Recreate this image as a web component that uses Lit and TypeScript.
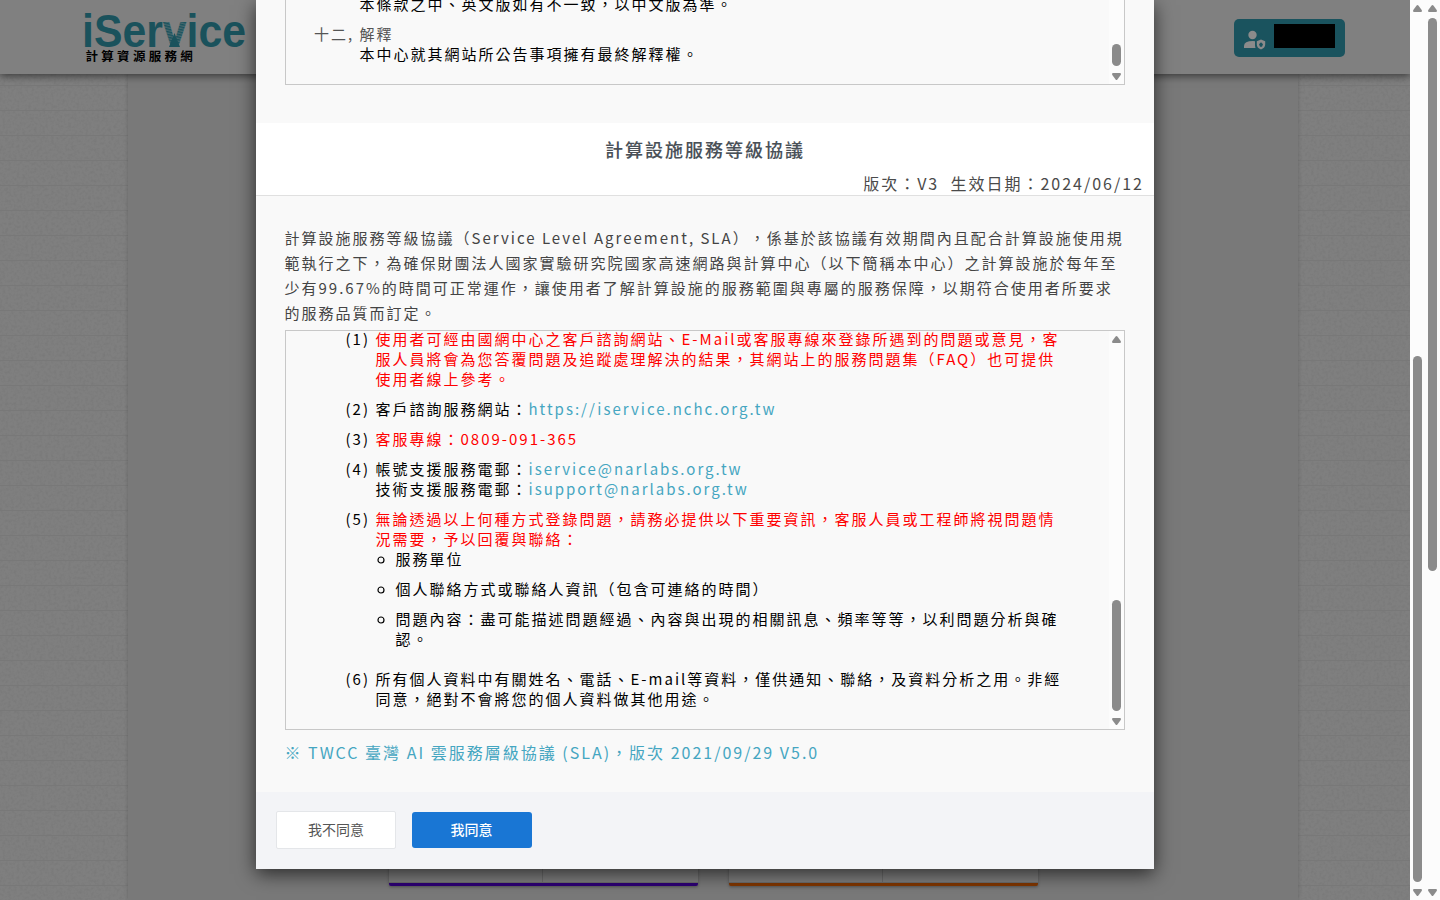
import { LitElement, html, css } from "lit";
import { customElement, property } from "lit/decorators.js";

@customElement("scroll-rail")
class ScrollRail extends LitElement {
  @property({ type: Number }) start = 0;
  @property({ type: Number }) size = 0;
  @property({ type: Boolean }) noup = false;
  static styles = css`
    :host { display: block; width: 15px; height: 100%; background: #fcfcfc; position: relative; flex: none; }
    .thumb { position: absolute; left: 3px; width: 9px; border-radius: 5px; background: #8b8b8b; }
    svg { position: absolute; left: 3px; width: 9px; height: 7px; fill: #8b8b8b; }
    .up { top: 5px; }
    .down { bottom: 4px; }
  `;
  render() {
    return html`
      ${this.noup ? "" : html`<svg class="up" viewBox="0 0 9 7"><path d="M4.5 0Q5 0 5.4.5L8.7 5Q9.4 7 8 7H1Q-.4 7 .3 5L3.6.5Q4 0 4.5 0Z"/></svg>`}
      <div class="thumb" style="top:${this.start}px;height:${this.size}px"></div>
      <svg class="down" viewBox="0 0 9 7"><path d="M4.5 7Q5 7 5.4 6.5L8.7 2Q9.4 0 8 0H1Q-.4 0 .3 2L3.6 6.5Q4 7 4.5 7Z"/></svg>
    `;
  }
}

@customElement("app-root")
class AppRoot extends LitElement {
  static styles = css`
    :host {
      display: flex; width: 1440px; height: 900px; overflow: hidden; position: relative;
      font-family: "Noto Sans CJK TC", sans-serif; font-size: 15px; letter-spacing: 2px;
      text-spacing-trim: space-all;
    }
    * { box-sizing: border-box; }
    .page { flex: 1; display: flex; flex-direction: column; background: #7f7f7f; position: relative; overflow: hidden; }
    .grain { position: absolute; inset: 0; width: 100%; height: 100%; }
    header {
      height: 74px; flex: none; background: #808080; position: relative; z-index: 1; display: flex;
      justify-content: space-between; padding: 0 65px 0 80px; box-shadow: 0 2px 8px rgba(0,0,0,.55);
    }
    .logo { width: 170px; height: 74px; }
    .word { font: bold 46px "Liberation Sans", sans-serif; letter-spacing: 0; fill: #1a525c; }
    .weave { fill: url(#stripes); }
    .sub { font: bold 12.5px "Noto Sans CJK TC", sans-serif; letter-spacing: 3.3px; fill: #000; }
    .user { margin-top: 19px; width: 111px; height: 38px; border-radius: 5px; background: #1a535e; display: flex; padding: 5px 10px; justify-content: space-between; }
    .user svg { width: 22px; height: 28px; }
    .mask { width: 61px; height: 24px; background: #000; }
    .container {
      flex: 1; width: 1170px; margin-left: 128px; background: #797979; position: relative;
      box-shadow: 0 0 4px rgba(0,0,0,.2); display: flex; align-items: flex-start; gap: 31px; padding: 712px 0 0 261px;
    }
    .card { width: 309px; height: 100px; background: #808080; border-bottom: 3px solid; border-radius: 2px; box-shadow: 0 1px 3px rgba(0,0,0,.3); display: flex; }
    .card i { flex: 1; border-bottom: 1px solid #6e6e6e; }
    .card i + i { flex: 0 0 156px; border-left: 1px solid #6e6e6e; }
    .purple { border-color: #2d0075; }
    .orange { border-color: #803600; }
    .modal {
      position: absolute; left: 256px; top: 0; width: 898px; height: 869px; z-index: 2; background: #f9f9f9;
      box-shadow: 0 5px 18px rgba(0,0,0,.65); display: flex; flex-direction: column;
    }
    .box { width: 840px; margin-left: 29px; border: 1px solid #c8c8c8; display: flex; overflow: hidden; flex: none; }
    .doc { flex: 1; line-height: 20px; color: #000; white-space: nowrap; }
    .first { height: 85px; border-top: 0; }
    .first .doc { padding-left: 28px; margin-top: -6px; }
    .row { display: flex; margin-bottom: 10px; }
    .num { width: 45.5px; color: #555; flex: none; }
    .gray { color: #555; }
    .title { margin-top: 38px; height: 73px; background: #fff; border-bottom: 1px solid #e0e0e0; flex: none; }
    h2 { margin: 0; padding-top: 11px; font-size: 18px; font-weight: 500; line-height: 30px; text-align: center; color: #495057; -webkit-text-stroke: .1px #495057; }
    .ver { font-size: 16px; line-height: 24px; text-align: right; padding: 7px 10px 0 0; color: #4a4a4a; white-space: pre; }
    .intro { margin: 29px 0 0 28.5px; height: 105px; line-height: 25px; color: #444; white-space: nowrap; flex: none; }
    .second { height: 400px; }
    .second .doc { padding-left: 59.5px; margin-top: -2px; }
    .second .num { width: 30px; color: #000; }
    .red { color: #f00; }
    .link { color: #45a6c1; }
    ul { margin: 0; padding: 0 0 0 20px; list-style: none; }
    li { margin-bottom: 10px; display: flex; }
    li svg { width: 8px; height: 20px; margin: 0 11px 0 -19px; flex: none; }
    .twcc { margin: 10px 0 0 28.5px; font-size: 16px; line-height: 24px; height: 52px; flex: none; }
    footer { flex: 1; background: #f3f4f7; display: flex; align-items: center; gap: 16px; padding: 0 20px 2px; }
    button { font: 14px "Noto Sans CJK TC", sans-serif; width: 120px; height: 38px; border: 1px solid #e4e6e9; border-radius: 2px; background: #fff; color: #555; padding: 0 0 2px; }
    .ok { height: 36px; border: 0; border-radius: 3px; background: #1976d4; color: #fff; font-weight: 500; padding-right: 1px; }
  `;

  item(n: string, body: unknown) {
    return html`<div class="row"><span class="num">${n}</span><div>${body}</div></div>`;
  }

  bullet(body: unknown) {
    return html`<li><svg viewBox="0 0 8 20"><circle cx="4" cy="11" r="3" fill="none" stroke="#000" stroke-width="1.200"/></svg><span>${body}</span></li>`;
  }

  render() {
    return html`
      <div class="page">
        <svg class="grain">
          <defs>
            <filter id="paper"><feTurbulence type="fractalNoise" baseFrequency=".35" numOctaves="2" seed="4"/><feColorMatrix values="0 0 0 0 0  0 0 0 0 0  0 0 0 0 0  .1 0 0 0 -.04"/></filter>
            <pattern id="rules" width="20" height="25" patternUnits="userSpaceOnUse" y="10"><rect width="20" height="1" fill="#787878"/></pattern>
          </defs>
          <rect width="1410" height="900" filter="url(#paper)"/>
          <rect width="1410" height="900" fill="url(#rules)"/>
        </svg>
        <header>
          <svg class="logo" viewBox="80 0 170 74">
            <defs>
              <pattern id="stripes" width="40" height="2.600" patternUnits="userSpaceOnUse" patternTransform="rotate(14)"><rect width="40" height="2.600" fill="#47686e"/><rect width="40" height="1.300" fill="#1a525c"/></pattern>
            </defs>
            <text class="word" x="82" y="47" textLength="164" lengthAdjust="spacingAndGlyphs">iSer<tspan class="weave">v</tspan>ice</text>
            <path d="M174.500 33L180 47H169Z" fill="#1a525c"/>
            <text class="sub" x="85.500" y="60.500">計算資源服務網</text>
          </svg>
          <div class="user">
            <svg viewBox="0 0 22 28" fill="#8b8b8b">
              <circle cx="8.500" cy="11" r="4.200"/>
              <path d="M0 24V22Q0 17 9 17Q10.500 17 11 17.200V21Q11 22.500 11.500 24Z"/>
              <path fill-rule="evenodd" d="M17 15.500L21.200 17.200V20.500Q21.200 23.800 17 25.500Q12.800 23.800 12.800 20.500V17.200ZM17 18.200L15 20.300L16 22.700H18L19 20.300Z"/>
            </svg>
            <div class="mask"></div>
          </div>
        </header>
        <div class="container">
          <div class="card purple"><i></i><i></i></div>
          <div class="card orange"><i></i><i></i></div>
        </div>
        <div class="modal">
          <div class="box first">
            <div class="doc">
              ${this.item("", "本條款之中、英文版如有不一致，以中文版為準。")}
              ${this.item("十二,", html`<span class="gray">解釋</span><br>本中心就其網站所公告事項擁有最終解釋權。`)}
            </div>
            <scroll-rail noup start="44" size="22"></scroll-rail>
          </div>
          <div class="title">
            <h2>計算設施服務等級協議</h2>
            <div class="ver">版次：V3  生效日期：2024/06/12</div>
          </div>
          <div class="intro">計算設施服務等級協議（Service Level Agreement, SLA），係基於該協議有效期間內且配合計算設施使用規<br>範執行之下，為確保財團法人國家實驗研究院國家高速網路與計算中心（以下簡稱本中心）之計算設施於每年至<br>少有99.67%的時間可正常運作，讓使用者了解計算設施的服務範圍與專屬的服務保障，以期符合使用者所要求<br>的服務品質而訂定。</div>
          <div class="box second">
            <div class="doc">
              ${this.item("(1)", html`<span class="red">使用者可經由國網中心之客戶諮詢網站、E-Mail或客服專線來登錄所遇到的問題或意見，客<br>服人員將會為您答覆問題及追蹤處理解決的結果，其網站上的服務問題集（FAQ）也可提供<br>使用者線上參考。</span>`)}
              ${this.item("(2)", html`客戶諮詢服務網站：<span class="link">https://iservice.nchc.org.tw</span>`)}
              ${this.item("(3)", html`<span class="red">客服專線：0809-091-365</span>`)}
              ${this.item("(4)", html`帳號支援服務電郵：<span class="link">iservice@narlabs.org.tw</span><br>技術支援服務電郵：<span class="link">isupport@narlabs.org.tw</span>`)}
              ${this.item("(5)", html`<span class="red">無論透過以上何種方式登錄問題，請務必提供以下重要資訊，客服人員或工程師將視問題情<br>況需要，予以回覆與聯絡：</span>
                <ul>
                  ${this.bullet("服務單位")}
                  ${this.bullet("個人聯絡方式或聯絡人資訊（包含可連絡的時間）")}
                  ${this.bullet(html`問題內容：盡可能描述問題經過、內容與出現的相關訊息、頻率等等，以利問題分析與確<br>認。`)}
                </ul>`)}
              ${this.item("(6)", html`所有個人資料中有關姓名、電話、E-mail等資料，僅供通知、聯絡，及資料分析之用。非經<br>同意，絕對不會將您的個人資料做其他用途。`)}
            </div>
            <scroll-rail start="269" size="111"></scroll-rail>
          </div>
          <div class="twcc link">※ TWCC 臺灣 AI 雲服務層級協議 (SLA)，版次 2021/09/29 V5.0</div>
          <footer><button>我不同意</button><button class="ok">我同意</button></footer>
        </div>
      </div>
      <scroll-rail start="356" size="526"></scroll-rail>
      <scroll-rail start="18" size="553"></scroll-rail>
    `;
  }
}
